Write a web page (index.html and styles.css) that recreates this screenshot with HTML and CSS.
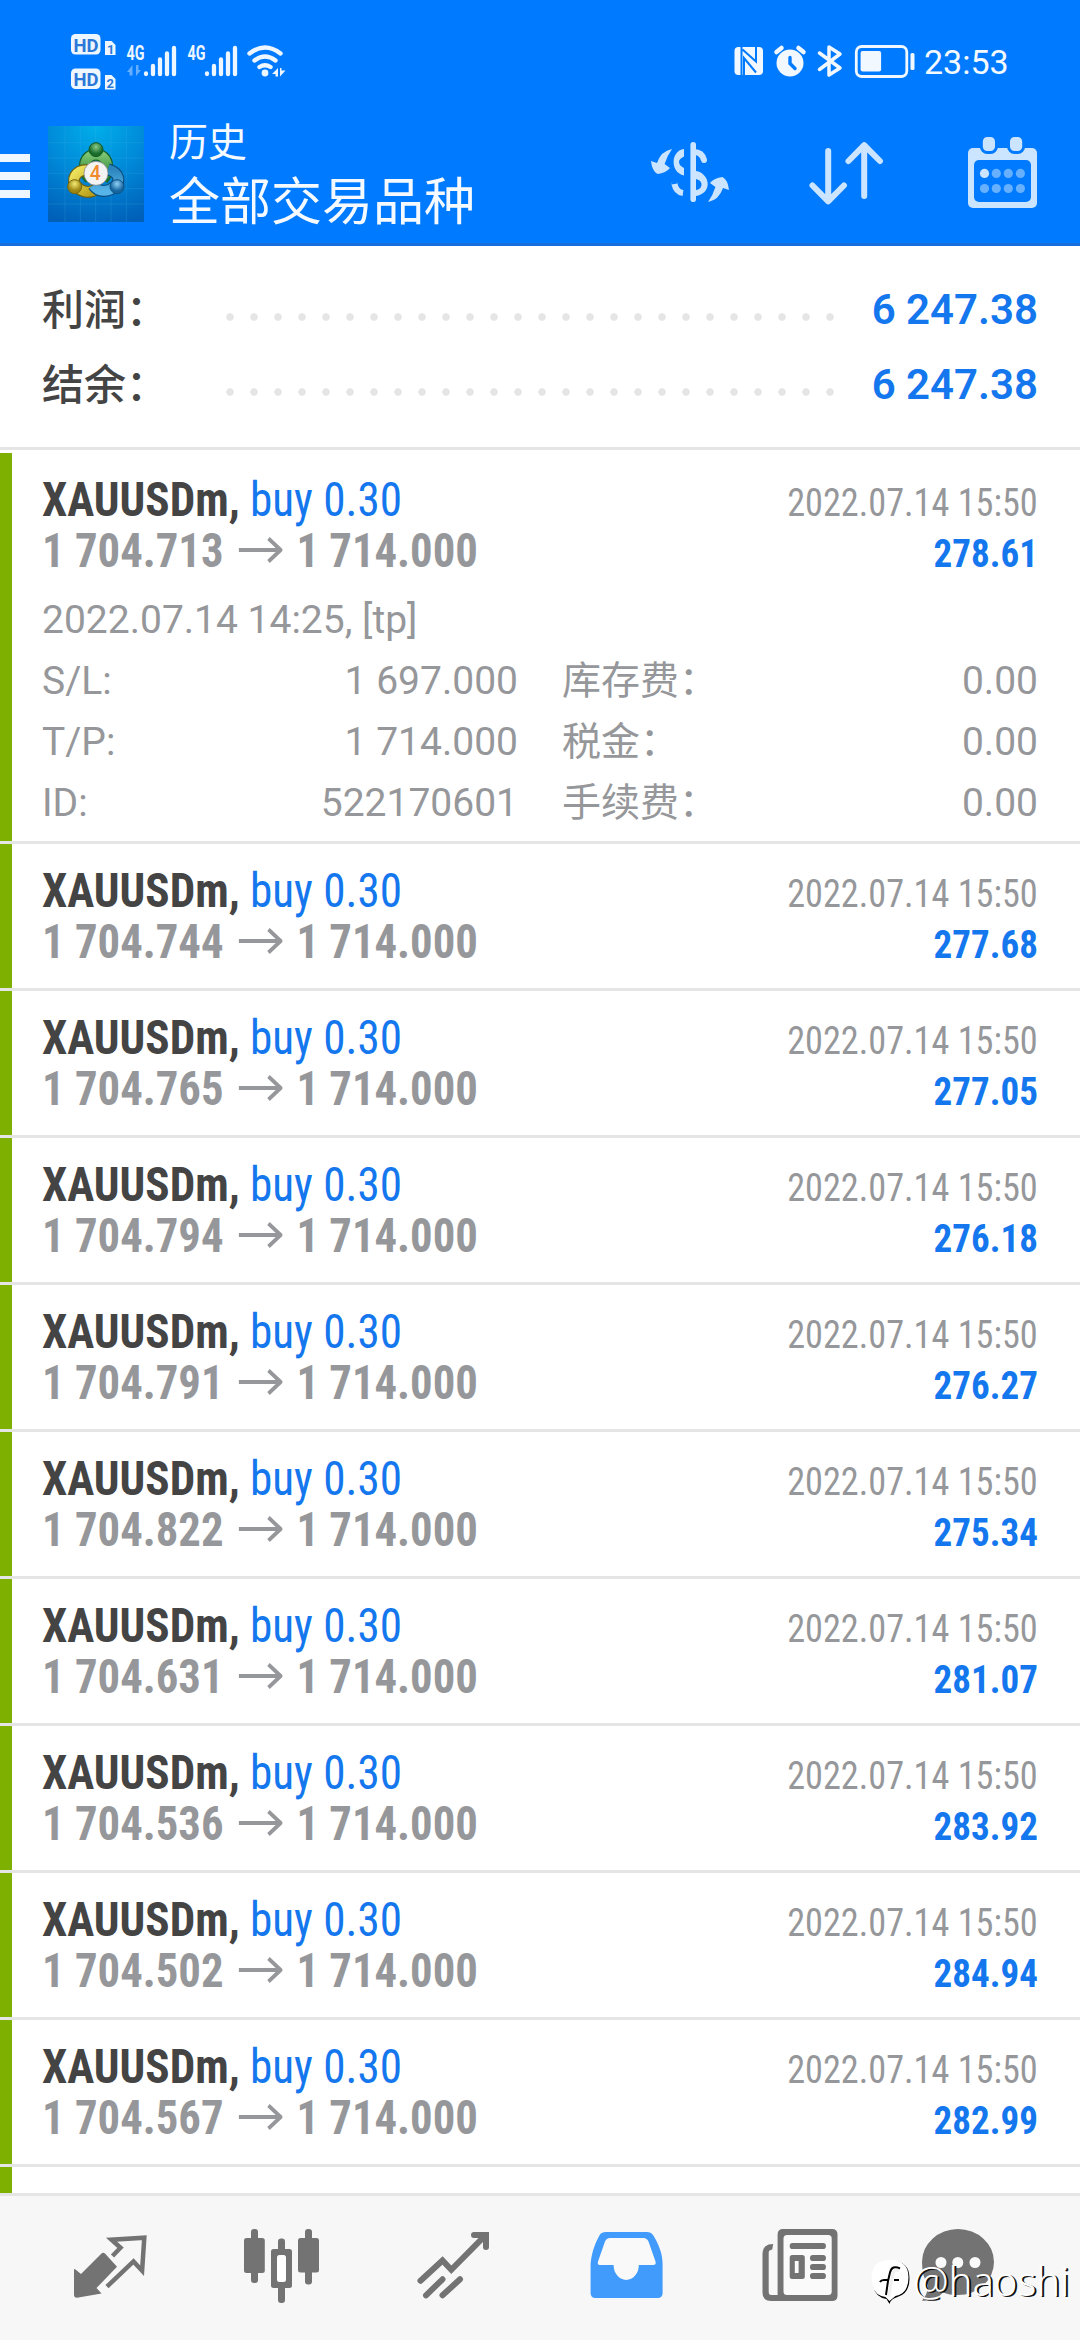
FILE: index.html
```html
<!DOCTYPE html>
<html lang="zh-CN">
<head>
<meta charset="utf-8">
<title>历史</title>
<link rel="stylesheet" href="styles.css">
</head>
<body>
<div class="app">
  <header class="header">
    <div class="status">
      <svg class="status-left" width="220" height="96" viewBox="70 0 220 96">
        <g fill="#eef6ff">
          <rect x="71" y="34" width="29.500" height="20.500" rx="4.500"/><path d="M105 41h6.500l4 4v10H105z"/>
          <rect x="71" y="68.500" width="29.500" height="20.500" rx="4.500"/><path d="M105 75h6.500l4 4v10.500H105z"/>
        </g>
        <g class="st-badge"><text x="73.500" y="51.500" textLength="25" lengthAdjust="spacingAndGlyphs">HD</text><text x="73.500" y="86" textLength="25" lengthAdjust="spacingAndGlyphs">HD</text></g>
        <g class="st-num"><text x="107" y="53.500">1</text><text x="106.500" y="88">2</text></g>
        <g class="st-net"><text x="126.500" y="60" textLength="18" lengthAdjust="spacingAndGlyphs">4G</text><text x="187.500" y="60" textLength="18" lengthAdjust="spacingAndGlyphs">4G</text></g>
        <g fill="#66aeff"><path d="M132.500 65v10.500h-3V72H127z M136 65h2.500v5h2.500l-5 6z"/></g>
        <g stroke="#eef6ff" stroke-width="4.300" stroke-linecap="round">
          <path d="M146 73.500v.6M153 66v8.200M160 59.500v14.700M167 53.500v20.700M174 48v26.200M207 73.500v.6M214 66v8.200M221 59.500v14.700M228 53.500v20.700M235 48v26.200"/>
        </g>
        <g fill="none" stroke="#eef6ff" stroke-width="4.400" stroke-linecap="round"><path d="M249.500 53.500q15.500-12 31 0M254.500 60.500q10.500-8 21 0M259.500 67q5.500-3.500 11 0"/></g>
        <circle cx="265" cy="73" r="3.400" fill="#eef6ff"/><path d="M278 68v8.500h-2.500V74H272zM280 68h1.500v2.500h4L280 76.500z" fill="#eef6ff"/>
      </svg>
      <svg class="status-right" width="184" height="96" viewBox="732 0 184 96">
        <rect x="734.500" y="47" width="28.500" height="28" rx="4" fill="#f2f8ff"/>
        <path d="M741.500 47v28M756 47v14.500L742.500 49.500M744 75V58l12 14.500" fill="none" stroke="#007aff" stroke-width="2"/>
        <circle cx="790" cy="63" r="13.500" fill="#f2f8ff"/><path d="M776.500 52l5-4M803.500 52l-5-4" stroke="#f2f8ff" stroke-width="4.500" stroke-linecap="round"/><path d="M790 57.500v6l5 5" fill="none" stroke="#007aff" stroke-width="3.400" stroke-linecap="round"/>
        <path d="M819.500 53l20.500 15-11 7V47l11 7-20.500 15.500" fill="none" stroke="#f2f8ff" stroke-width="3.500" stroke-linejoin="round" stroke-linecap="round"/>
        <rect x="856.300" y="46.500" width="50.500" height="30" rx="5.500" fill="none" stroke="#f2f8ff" stroke-width="2.800"/><rect x="860.600" y="51" width="20.500" height="20.500" rx="2" fill="#f2f8ff"/><rect x="910.500" y="53" width="4" height="17" rx="1.500" fill="#f2f8ff"/>
      </svg>
      <span class="clock">23:53</span>
    </div>
    <div class="toolbar">
      <svg class="menu" width="48" height="147" viewBox="0 96 48 147"><path d="M0 154h30v8H0zM0 172h30v8H0zM0 190h30v8H0z" fill="#eef6ff"/></svg>
      <svg class="logo" width="96" height="96" viewBox="24 48 288 288">
        <defs>
          <radialGradient id="sky" cx=".5" cy="0" r="1.05"><stop offset="0" stop-color="#00aeea"/><stop offset=".5" stop-color="#0089d8"/><stop offset="1" stop-color="#0060b8"/></radialGradient>
          <linearGradient id="gr" x2="0" y2="1"><stop stop-color="#7cc470"/><stop offset="1" stop-color="#1d7a30"/></linearGradient>
          <linearGradient id="ye" x2="1" y2="1"><stop stop-color="#f0e560"/><stop offset="1" stop-color="#b39a13"/></linearGradient>
          <linearGradient id="bl" x2="0" y2="1"><stop stop-color="#2c86bd"/><stop offset="1" stop-color="#56b4e8"/></linearGradient>
          <radialGradient id="gb" cy=".3"><stop stop-color="#8acb8a"/><stop offset="1" stop-color="#176b2b"/></radialGradient>
          <radialGradient id="yb" cy=".3"><stop stop-color="#f3ea74"/><stop offset="1" stop-color="#9c8510"/></radialGradient>
          <radialGradient id="bb" cy=".3"><stop stop-color="#8fd0f5"/><stop offset="1" stop-color="#15659f"/></radialGradient>
        </defs>
        <path d="M24 48h288v288H24z" fill="url(#sky)"/>
        <path d="M75 48v288M121 48v288M167 48v288M213 48v288M259 48v288M24 98h288M24 144h288M24 190h288M24 236h288M24 282h288" stroke="#49b6ee" stroke-width="2" opacity=".3"/>
        <g fill="none" stroke-width="36">
          <path d="M150 206C122 176 134 134 168 134S214 176 188 208" stroke="#17602b"/><path d="M150 206C122 176 134 134 168 134S214 176 188 208" stroke="url(#gr)" stroke-width="29"/>
          <path d="M146 180C104 178 92 212 110 230S152 252 176 234" stroke="#6d6212"/><path d="M146 180C104 178 92 212 110 230S152 252 176 234" stroke="url(#ye)" stroke-width="29"/>
          <path d="M204 178C238 188 242 212 226 228S178 252 160 226" stroke="#0d4d80"/><path d="M204 178C238 188 242 212 226 228S178 252 160 226" stroke="url(#bl)" stroke-width="29"/>
        </g>
        <circle cx="168" cy="119" r="21" fill="url(#gb)" stroke="#125a22" stroke-width="3"/><circle cx="104" cy="230" r="21" fill="url(#yb)" stroke="#766711" stroke-width="3"/><circle cx="231" cy="230" r="21" fill="url(#bb)" stroke="#0e5385" stroke-width="3"/>
        <circle cx="168" cy="190" r="36" fill="#f3f3f3" stroke="#777" stroke-width="2"/>
        <text class="logo-four" x="149" y="211">4</text>
      </svg>
      <div class="titles"><div class="title-sub">历史</div><div class="title-main">全部交易品种</div></div>
      <svg class="actions" width="400" height="147" viewBox="645 96 400 147">
        <g fill="#cbe4ff">
          <rect x="690.400" y="142" width="5.600" height="60" rx="2.800"/>
          <path d="M684 149C677 150 673.600 156 673.600 162S677 174 684 175.500V168C681 166.500 679 164.500 679 162S681 158 684 156.500Z"/>
          <path d="M696 171C703 172 707.700 178 707.700 184S703 195 696 196V190C700 189.500 701.500 187 701.500 184.500S700 180 696 179Z"/>
          <path id="swap" d="M672 149Q667 156 664.600 164L670 168Q666 173 657.500 174Q652 171 651 161L657 163Q661 151 672 149Z"/>
          <use href="#swap" transform="rotate(180 690 175.500)"/>
        </g>
        <g fill="none" stroke="#cbe4ff" stroke-width="6" stroke-linecap="round" stroke-linejoin="round">
          <path d="M694 152Q702 152 704 160"/><path d="M674.500 184Q676 192 683 193" stroke-linecap="butt"/><circle cx="674.500" cy="184" r=".1"/>
          <path d="M828.200 151v50M812.500 185.500l15.700 15.800 15.700-15.800M864.200 196v-50M848.500 161l15.700-15.800 15.700 15.800"/>
        </g>
        <rect x="968" y="148" width="69" height="60" rx="5" fill="#cbe4ff"/><rect x="974" y="160" width="57" height="42" rx="5" fill="#007aff"/>
        <g fill="#cbe4ff" stroke="#007aff" stroke-width="3"><rect x="981.300" y="135.500" width="15.200" height="17" rx="6"/><rect x="1008.500" y="135.500" width="15.200" height="17" rx="6"/></g>
        <g fill="#66b0ff"><circle cx="984.500" cy="173.400" r="4.600" fill="#cbe4ff"/><circle cx="996.300" cy="173.400" r="4.600"/><circle cx="1008.300" cy="173.400" r="4.600"/><circle cx="1020.400" cy="173.400" r="4.600"/><circle cx="984.500" cy="188.500" r="4.600"/><circle cx="996.300" cy="188.500" r="4.600"/><circle cx="1008.300" cy="188.500" r="4.600"/><circle cx="1020.400" cy="188.500" r="4.600"/></g>
      </svg>
    </div>
  </header>

  <section class="summary">
    <div class="sum-row"><span class="sum-label">利润：</span><span class="dots"></span><span class="sum-value">6 247.38</span></div>
    <div class="sum-row"><span class="sum-label">结余：</span><span class="dots"></span><span class="sum-value">6 247.38</span></div>
  </section>

  <main class="deals">
    <article class="deal">
      <div class="line"><span class="name"><b>XAUUSDm,</b> <span class="side">buy 0.30</span></span><span class="time">2022.07.14 15:50</span></div>
      <div class="line"><span class="price">1 704.713 <svg class="arrow" viewBox="0 0 47 26"><path d="M0 13h45M32 1.500L45 13 32 24.500"/></svg> 1 714.000</span><span class="profit">278.61</span></div>
      <div class="details">
        <div class="open-time">2022.07.14 14:25, [tp]</div>
        <div class="pair"><span>S/L:</span><span>1 697.000</span></div><div class="pair"><span>库存费：</span><span>0.00</span></div>
        <div class="pair"><span>T/P:</span><span>1 714.000</span></div><div class="pair"><span>税金：</span><span>0.00</span></div>
        <div class="pair"><span>ID:</span><span>522170601</span></div><div class="pair"><span>手续费：</span><span>0.00</span></div>
      </div>
    </article>
    <article class="deal"><div class="line"><span class="name"><b>XAUUSDm,</b> <span class="side">buy 0.30</span></span><span class="time">2022.07.14 15:50</span></div><div class="line"><span class="price">1 704.744 <svg class="arrow" viewBox="0 0 47 26"><path d="M0 13h45M32 1.500L45 13 32 24.500"/></svg> 1 714.000</span><span class="profit">277.68</span></div></article>
    <article class="deal"><div class="line"><span class="name"><b>XAUUSDm,</b> <span class="side">buy 0.30</span></span><span class="time">2022.07.14 15:50</span></div><div class="line"><span class="price">1 704.765 <svg class="arrow" viewBox="0 0 47 26"><path d="M0 13h45M32 1.500L45 13 32 24.500"/></svg> 1 714.000</span><span class="profit">277.05</span></div></article>
    <article class="deal"><div class="line"><span class="name"><b>XAUUSDm,</b> <span class="side">buy 0.30</span></span><span class="time">2022.07.14 15:50</span></div><div class="line"><span class="price">1 704.794 <svg class="arrow" viewBox="0 0 47 26"><path d="M0 13h45M32 1.500L45 13 32 24.500"/></svg> 1 714.000</span><span class="profit">276.18</span></div></article>
    <article class="deal"><div class="line"><span class="name"><b>XAUUSDm,</b> <span class="side">buy 0.30</span></span><span class="time">2022.07.14 15:50</span></div><div class="line"><span class="price">1 704.791 <svg class="arrow" viewBox="0 0 47 26"><path d="M0 13h45M32 1.500L45 13 32 24.500"/></svg> 1 714.000</span><span class="profit">276.27</span></div></article>
    <article class="deal"><div class="line"><span class="name"><b>XAUUSDm,</b> <span class="side">buy 0.30</span></span><span class="time">2022.07.14 15:50</span></div><div class="line"><span class="price">1 704.822 <svg class="arrow" viewBox="0 0 47 26"><path d="M0 13h45M32 1.500L45 13 32 24.500"/></svg> 1 714.000</span><span class="profit">275.34</span></div></article>
    <article class="deal"><div class="line"><span class="name"><b>XAUUSDm,</b> <span class="side">buy 0.30</span></span><span class="time">2022.07.14 15:50</span></div><div class="line"><span class="price">1 704.631 <svg class="arrow" viewBox="0 0 47 26"><path d="M0 13h45M32 1.500L45 13 32 24.500"/></svg> 1 714.000</span><span class="profit">281.07</span></div></article>
    <article class="deal"><div class="line"><span class="name"><b>XAUUSDm,</b> <span class="side">buy 0.30</span></span><span class="time">2022.07.14 15:50</span></div><div class="line"><span class="price">1 704.536 <svg class="arrow" viewBox="0 0 47 26"><path d="M0 13h45M32 1.500L45 13 32 24.500"/></svg> 1 714.000</span><span class="profit">283.92</span></div></article>
    <article class="deal"><div class="line"><span class="name"><b>XAUUSDm,</b> <span class="side">buy 0.30</span></span><span class="time">2022.07.14 15:50</span></div><div class="line"><span class="price">1 704.502 <svg class="arrow" viewBox="0 0 47 26"><path d="M0 13h45M32 1.500L45 13 32 24.500"/></svg> 1 714.000</span><span class="profit">284.94</span></div></article>
    <article class="deal"><div class="line"><span class="name"><b>XAUUSDm,</b> <span class="side">buy 0.30</span></span><span class="time">2022.07.14 15:50</span></div><div class="line"><span class="price">1 704.567 <svg class="arrow" viewBox="0 0 47 26"><path d="M0 13h45M32 1.500L45 13 32 24.500"/></svg> 1 714.000</span><span class="profit">282.99</span></div></article>
    <article class="deal deal-next"></article>
  </main>

  <nav class="tabs">
    <svg viewBox="70 2226 80 80"><path d="M74 2269.500q0-1 1.500 0L81 2274l20.500-20.500q1.800-1.500 3.500 0l12 13.200-20.500 21.300 5 5.500-24.500 4.200q-3 0-3-3z" fill="#737373"/><path d="M112.500 2256l8-8.300-9-8 32.800-2-2.200 33-8.600-9.300-26.500 25.200" fill="none" stroke="#737373" stroke-width="4.500"/></svg>
    <svg viewBox="242 2226 80 80"><g fill="#737373"><rect x="244" y="2238" width="20.800" height="35" rx="2.500"/><rect x="251" y="2229" width="7" height="54" rx="3"/><rect x="271" y="2249" width="21" height="39" rx="2.500"/><rect x="278" y="2238.500" width="7" height="64.500" rx="3"/><rect x="298" y="2238" width="21" height="34.500" rx="2.500"/><rect x="305" y="2229" width="7" height="55.500" rx="3"/></g><rect x="277" y="2255" width="9" height="27" rx="2.500" fill="#fff"/></svg>
    <svg viewBox="414 2226 80 80"><g fill="none" stroke="#737373" stroke-width="6" stroke-linecap="round"><path d="M420.500 2280.700l22-20.200 8.800 9.300 33.500-34M474 2235h12v12"/><path d="M442.500 2279.300L426 2295.300M460 2279.300l-17.500 16"/></g></svg>
    <svg viewBox="586 2226 80 80"><path d="M590.600 2264C591.500 2252 596 2241 600 2234.500Q601.500 2232 606 2232H647Q651 2232 653 2235C658 2243 662.600 2253 662.600 2264V2293q0 5-5 5H595.600q-5 0-5-5z" fill="#419bfc"/><path d="M610 2238h33.500q3.500 0 5 3.500l7 20q1 3.500-2.500 3.500h-14.200a12.600 15 0 01-25.200 0H600q-3 0-2-3.500l7-20q1.500-3.500 5-3.500z" fill="#f9f9f9"/></svg>
    <svg viewBox="760 2226 80 80"><path d="M783 2229h49q5.500 0 5.500 5.500v61q0 5.500-5.500 5.500h-61q-8.500 0-8.500-8.500v-39q0-9.500 10.700-9.500l-1 5.500q-3.500.5-3.500 3v39.500q0 3 2.500 3h6.400v-60.500q0-5.500 5.400-5.500z" fill="#737373"/><rect x="783.500" y="2235" width="48.200" height="60" rx="3.500" fill="#fafafa"/><g fill="#737373"><rect x="789.700" y="2243" width="36.200" height="6" rx="2.800"/><rect x="789.700" y="2255" width="15.100" height="24" rx="2.500"/><rect x="810" y="2255" width="15.900" height="6" rx="2.800"/><rect x="810" y="2264" width="15.900" height="6" rx="2.800"/><rect x="810" y="2273" width="15.900" height="6" rx="2.800"/></g><path d="M794.800 2261h3.800v12h-3.800z" fill="#fafafa"/></svg>
    <svg viewBox="918 2226 80 80"><path d="M958 2229a36 33 0 110 66q-9 0-15-2.500-8 9-21 8.300 6-7 6-15.500-6-9-6-23.300a36 33 0 0136-33z" fill="#737373"/><g fill="#fafafa"><circle cx="941" cy="2262.500" r="5.500"/><circle cx="957.800" cy="2262.500" r="5.500"/><circle cx="975" cy="2262.500" r="5.500"/></g></svg>
  </nav>
  <div class="watermark">
    <svg width="42" height="48" viewBox="870 2259 42 48"><path d="M890 2262q19.500-1 19.500 17.500 0 15-12 18.500-7 2-8 7l-3-5q-14-2-14-20 0-17 17.500-18z" fill="#000"/><path d="M890 2261q18.500 0 18.500 17.500 0 16-13 18.500l-6 5-4-4q-14-2-14-19 0-18 18.500-18z" fill="#fff"/><path d="M900 2269.500q-8-4-10 4l-2 8.500-2 14M880 2283q1-2 4-2h4M894 2281h5" fill="none" stroke="#000" stroke-width="2"/><path d="M899 2271.500q-5-1.500-6 3.500l-4.500 23" fill="none" stroke="#f1f1f1" stroke-width="3"/></svg>
    <span>@haoshi</span>
  </div>
</div>
</body>
</html>
```
FILE: styles.css
```css
* { box-sizing: border-box; }
body { margin: 0; }
.app {
  position: relative;
  width: 1080px; height: 2340px;
  overflow: hidden;
  display: flex; flex-direction: column;
  background: #fff;
  font-family: Roboto, "Noto Sans CJK SC", sans-serif;
}
svg { display: block; flex: none; }

.header { flex: none; height: 246px; background: #007aff; border-bottom: 3px solid #176fdc; color: #f4faff; }
.status { display: flex; height: 96px; padding-left: 70px; }
.status-right { margin-left: 442px; }
.clock { margin-left: 8px; font-size: 34px; font-weight: 450; line-height: 125px; }
.st-badge { font: 700 19px Roboto, sans-serif; fill: #2b78d8; }
.st-num { font: 700 13px Roboto, sans-serif; fill: #2b78d8; }
.st-net { font: 700 19.500px Roboto, sans-serif; fill: #eef6ff; }
.toolbar { display: flex; height: 147px; }
.logo { margin-top: 30px; }
.logo-four { font: 500 58px Roboto, sans-serif; fill: #f18a2c; }
.titles { padding: 20px 0 0 25px; flex: 1; }
.title-sub { font-size: 39px; line-height: 54px; height: 55px; }
.title-main { font-size: 51px; line-height: 64px; height: 64px; }
.actions { margin-right: 35px; }

.summary { flex: none; height: 204px; padding: 26px 42px 0; border-bottom: 3px solid #e5e5e5; }
.sum-row { display: flex; height: 75px; line-height: 75px; font-size: 42px; }
.sum-label { width: 176px; color: #444; font-weight: 500; padding-top: 1px; }
.dots { width: 624px; height: 8px; margin-top: 41px; background: radial-gradient(circle, #e5e5e5 3.400px, transparent 4.100px) 0 0 / 24px 8px; }
.sum-value { flex: 1; text-align: right; color: #1477ee; font-weight: 620; white-space: nowrap; }

.deals { flex: none; height: 1743px; padding-top: 3px; overflow: hidden; }
.deal {
  height: 147px; padding: 21px 42px 0;
  border-bottom: 3px solid #e5e5e5;
  background: linear-gradient(#7db000, #7db000) left top / 12px 100% no-repeat;
}
.deal:first-child { height: 391px; }
.line {
  display: flex; justify-content: space-between; align-items: baseline;
  height: 51px; line-height: 51px;
  font-family: "Roboto Condensed", Roboto, sans-serif; font-stretch: 75%;
  white-space: nowrap;
}
/* Figures are set narrower than the condensed face */
.name, .price { transform-origin: left; }
.time, .profit { transform-origin: right; }
.name { font-size: 48px; color: #444; transform: scaleX(.94); }
.side { color: #1477ee; }
.price { font-size: 48px; font-weight: 700; color: #96979a; transform: scaleX(.932); }
.arrow { display: inline-block; width: 47px; height: 26px; margin: 0 4px 0 5px; vertical-align: 4px; fill: none; stroke: #96979a; stroke-width: 4; }
.time { font-size: 39px; color: #96979a; transform: scaleX(.929); }
.profit { font-size: 39px; font-weight: 700; color: #1477ee; transform: scaleX(.95); }
.details { display: grid; grid-template-columns: 476px 476px; column-gap: 44px; padding-top: 14px; line-height: 61px; font-size: 39px; color: #96979a; }
.open-time { grid-column: 1 / 3; }
.pair { display: flex; justify-content: space-between; height: 61px; }

.tabs { flex: none; height: 147px; padding: 30px 0 0 24px; background: #f7f7f7; border-top: 3px solid #e5e5e5; display: grid; grid-template-columns: 172px 172px 172px 172px 176px 140px; justify-items: center; }
.tabs svg { width: 80px; height: 80px; }
.watermark { position: absolute; left: 870px; top: 2258px; display: flex; gap: 1px; color: #fff; font: 300 40px/46px "Noto Sans", sans-serif; text-shadow: 2px 1px 0 #111; }
```
